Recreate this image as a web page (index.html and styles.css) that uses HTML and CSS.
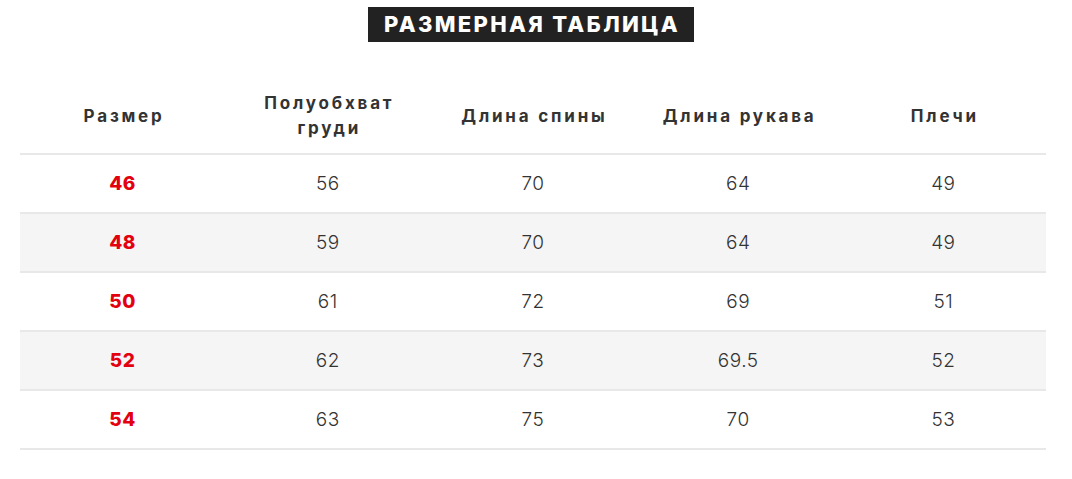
FILE: index.html
```html
<!DOCTYPE html>
<html lang="ru">
<head>
<meta charset="utf-8">
<link rel="stylesheet" href="styles.css">
</head>
<body>
<div class="page">
  <div class="title-wrap"><h1 class="title">Размерная таблица</h1></div>
  <table class="sizes">
    <thead>
      <tr>
        <th>Размер</th>
        <th>Полуобхват<br>груди</th>
        <th>Длина спины</th>
        <th>Длина рукава</th>
        <th>Плечи</th>
      </tr>
    </thead>
    <tbody>
      <tr><td class="size">46</td><td>56</td><td>70</td><td>64</td><td>49</td></tr>
      <tr class="alt"><td class="size">48</td><td>59</td><td>70</td><td>64</td><td>49</td></tr>
      <tr><td class="size">50</td><td>61</td><td>72</td><td>69</td><td>51</td></tr>
      <tr class="alt"><td class="size">52</td><td>62</td><td>73</td><td>69.5</td><td>52</td></tr>
      <tr><td class="size">54</td><td>63</td><td>75</td><td>70</td><td>53</td></tr>
    </tbody>
  </table>
</div>
</body>
</html>
```

FILE: styles.css
```css
html, body {
  margin: 0;
  padding: 0;
  background: #fff;
}
body {
  font-family: "Inter", "Open Sans", "Liberation Sans", sans-serif;
  color: #333;
}
.page {
  padding: 7px 26px 0 20px;
}
.title-wrap {
  display: flex;
  justify-content: center;
  padding-right: 4px;
}
.title {
  margin: 0;
  background: #222;
  color: #fff;
  font-size: 22px;
  font-weight: 800;
  text-transform: uppercase;
  letter-spacing: 2.3px;
  line-height: 35px;
  height: 35px;
  padding: 0 14px 0 16px;
}
.sizes {
  width: 100%;
  margin-top: 37px;
  border-collapse: collapse;
  table-layout: fixed;
}
.sizes th {
  height: 74px;
  padding: 0 0 0 3px;
  font-size: 17px;
  font-weight: 700;
  letter-spacing: 2.8px;
  line-height: 25px;
  color: #333;
  text-align: center;
  vertical-align: middle;
  border-bottom: 2px solid #e8e8e8;
}
.sizes td {
  height: 57px;
  padding: 0;
  text-align: center;
  vertical-align: middle;
  font-size: 19px;
  font-weight: 300;
  letter-spacing: 0.5px;
  color: #333;
  border-bottom: 2px solid #e8e8e8;
}
.sizes tr.alt td {
  background: #f5f5f5;
}
.sizes td.size {
  color: #e3000f;
  font-weight: 800;
}
```
